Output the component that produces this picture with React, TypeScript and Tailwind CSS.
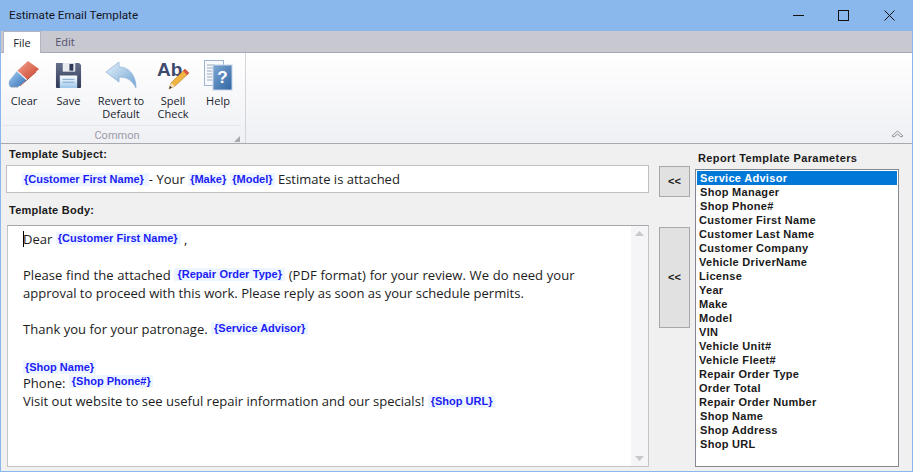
import React from "react";

const bodyFont = "font-['Open_Sans','Noto_Sans',sans-serif]";

function Tag({ children, cls = "px-[3px] align-[2px]" }: { children: React.ReactNode; cls?: string }) {
  return (
    <span className={`inline-block h-[13px] bg-[#edf6ff] font-['Liberation_Sans',sans-serif] text-[11px] leading-[13px] font-bold text-[#1c1cf5] ${cls}`}>
      {children}
    </span>
  );
}

function Eraser() {
  return (
    <svg width="32" height="30" viewBox="0 0 32 30">
      <defs>
        <linearGradient id="er1" x1="0" y1="0" x2="1" y2="1">
          <stop offset="0" stopColor="#f3a18e" />
          <stop offset="1" stopColor="#c9402c" />
        </linearGradient>
        <linearGradient id="er2" x1="0" y1="0" x2="1" y2="1">
          <stop offset="0" stopColor="#a8cdf0" />
          <stop offset="1" stopColor="#2f6fb8" />
        </linearGradient>
      </defs>
      <path d="M20 1 L31 9 L19 20 L9 11 Z" fill="url(#er1)" />
      <path d="M9 11 L19 20 L10 27 L2 27 Q0 24 1 21 Z" fill="url(#er2)" />
      <path d="M9 11 L19 20" stroke="#e8eef5" strokeWidth="1.2" />
      <path d="M12 26 L28 12" stroke="#a33525" strokeWidth="1" opacity="0.7" />
      <path d="M3 27 L10 27" stroke="#8a9bb0" strokeWidth="1" />
    </svg>
  );
}

function Floppy() {
  return (
    <svg width="27" height="27" viewBox="0 0 28 28">
      <defs>
        <linearGradient id="fl1" x1="0" y1="0" x2="0" y2="1">
          <stop offset="0" stopColor="#66708c" />
          <stop offset="1" stopColor="#2f3a58" />
        </linearGradient>
        <linearGradient id="fl2" x1="0" y1="0" x2="0" y2="1">
          <stop offset="0" stopColor="#ffffff" />
          <stop offset="1" stopColor="#9cc6ea" />
        </linearGradient>
      </defs>
      <path d="M1 1 H25 L27 3 V26 Q27 27 26 27 H2 Q1 27 1 26 Z" fill="url(#fl1)" />
      <rect x="8" y="1" width="13" height="9" fill="#e8ebf0" />
      <rect x="15" y="2" width="4" height="7" fill="#2f3a58" />
      <rect x="5" y="14" width="18" height="13" fill="url(#fl2)" />
      <path d="M8 18 H20 M8 21 H20" stroke="#7ea6cc" strokeWidth="1" />
    </svg>
  );
}

function BackArrow() {
  return (
    <svg width="32" height="28" viewBox="0 0 32 28">
      <defs>
        <linearGradient id="ba1" x1="0" y1="0" x2="1" y2="1">
          <stop offset="0" stopColor="#e6f2fb" />
          <stop offset="1" stopColor="#6fa3d2" />
        </linearGradient>
      </defs>
      <path
        d="M1 11 L14 1 L14 6 C23 6 31 13 31 27 C27 19 22 16 14 16 L14 21 Z"
        fill="url(#ba1)"
        stroke="#8fb4d6"
        strokeWidth="0.8"
      />
    </svg>
  );
}

function SpellCheck() {
  return (
    <svg width="33" height="32" viewBox="0 0 33 32">
      <text x="0" y="17" fontFamily="Liberation Sans, sans-serif" fontWeight="700" fontSize="19" fill="#3d4a6e">
        Ab
      </text>
      <path d="M12 30 L14 24 L28 10 L32 14 L18 27 Z" fill="#f2b440" stroke="#a9782a" strokeWidth="0.6" />
      <path d="M26 12 L30 16 L32 14 L28 10 Z" fill="#d9564a" />
      <path d="M12 30 L14 24 L18 27 Z" fill="#f5dfb8" />
      <path d="M12 30 L13 27 L15 28.5 Z" fill="#333" />
    </svg>
  );
}

function HelpIcon() {
  return (
    <svg width="29" height="31" viewBox="0 0 29 31">
      <rect x="0.5" y="0.5" width="19" height="25" fill="#f7f9fc" stroke="#9fb4cf" />
      <path d="M3 5 H11 M3 8 H10 M3 11 H8 M3 14 H8 M3 17 H8 M3 20 H8" stroke="#9aa8bb" strokeWidth="1" />
      <defs>
        <linearGradient id="he1" x1="0" y1="0" x2="1" y2="1">
          <stop offset="0" stopColor="#7fa7d4" />
          <stop offset="1" stopColor="#2f66a3" />
        </linearGradient>
      </defs>
      <rect x="9" y="5" width="19" height="25" fill="url(#he1)" stroke="#c5d4e6" />
      <text x="18.5" y="23" textAnchor="middle" fontFamily="Liberation Sans, sans-serif" fontWeight="700" fontSize="17" fill="#ffffff">
        ?
      </text>
    </svg>
  );
}

const tools: { w: string; icon: React.ReactNode; label: string[] }[] = [
  { w: "w-[42px]", icon: <Eraser />, label: ["Clear"] },
  { w: "w-[47px]", icon: <Floppy />, label: ["Save"] },
  { w: "w-[58px]", icon: <BackArrow />, label: ["Revert to", "Default"] },
  { w: "w-[46px]", icon: <SpellCheck />, label: ["Spell", "Check"] },
  { w: "w-[44px]", icon: <HelpIcon />, label: ["Help"] },
];

const params = [
  "Service Advisor",
  "Shop Manager",
  "Shop Phone#",
  "Customer First Name",
  "Customer Last Name",
  "Customer Company",
  "Vehicle DriverName",
  "License",
  "Year",
  "Make",
  "Model",
  "VIN",
  "Vehicle Unit#",
  "Vehicle Fleet#",
  "Repair Order Type",
  "Order Total",
  "Repair Order Number",
  "Shop Name",
  "Shop Address",
  "Shop URL",
];

function rowClass(i: number) {
  if (i === 0) return "h-[14px] bg-[#0078d7] pl-[3px] text-white";
  if (i < 3 || i > 16) return "h-[14px] pl-[3px]";
  return "h-[14px] pl-[2px]";
}

export default function App() {
  return (
    <div className={`flex h-[472px] w-[913px] flex-col overflow-hidden border-x border-b border-[#8ab8ed] bg-[#f0f0f0] ${bodyFont}`}>
      <div className="-mx-px flex h-[31px] shrink-0 items-center justify-between bg-[#8ab8ed] pl-[9px]">
        <span className="font-['Roboto',sans-serif] text-[11.7px] text-[#14141e]">Estimate Email Template</span>
        <div className="flex items-center">
          <div className="flex w-[46px] justify-center">
            <svg width="11" height="11" viewBox="0 0 11 11"><path d="M0 5.5 H11" stroke="#111" strokeWidth="1" /></svg>
          </div>
          <div className="flex w-[46px] justify-center pr-px">
            <svg width="11" height="11" viewBox="0 0 11 11"><rect x="0.5" y="0.5" width="10" height="10" fill="none" stroke="#111" /></svg>
          </div>
          <div className="flex w-[46px] justify-center pr-px">
            <svg width="11" height="11" viewBox="0 0 11 11"><path d="M0.5 0.5 L10.5 10.5 M10.5 0.5 L0.5 10.5" stroke="#111" strokeWidth="1" /></svg>
          </div>
        </div>
      </div>

      <div className="flex h-[22px] shrink-0 items-end border-b border-[#a8a8b4] bg-[#c8c8d0] pl-[2px]">
        <div className="-mb-px flex h-[22px] w-[38px] items-center justify-center border-x border-t border-[#b4b4be] bg-white pt-[2px] text-[11px] text-[#20242e]">File</div>
        <div className="flex h-[21px] w-[48px] items-center justify-center pt-[2px] text-[11px] text-[#50506a]">Edit</div>
      </div>

      <div className="flex h-[91px] shrink-0 border-b border-[#a8a8ae] bg-linear-to-b from-white to-[#eff0f4]">
        <div className="flex w-[245px] flex-col border-r border-[#d4d4da] pl-[2px]">
          <div className="flex h-[72px] items-start">
            {tools.map((t) => (
              <div key={t.label[0]} className={`flex ${t.w} flex-col items-center`}>
                <div className="flex h-[40px] items-center pt-[4px]">{t.icon}</div>
                <div className="pt-[1px] text-center text-[11px] leading-[13px] text-[#20242e]">
                  {t.label.map((l) => (
                    <div key={l} className="whitespace-nowrap">{l}</div>
                  ))}
                </div>
              </div>
            ))}
          </div>
          <div className="relative mr-[4px] flex h-[18px] items-center justify-center border-t border-[#e6e6ea] pt-[4px] pr-[10px] font-['Roboto',sans-serif] text-[11px] text-[#9a9aa8]">
            Common
            <svg className="absolute right-[1px] bottom-[1px]" width="6" height="6" viewBox="0 0 6 6"><path d="M6 0 V6 H0 Z" fill="#a8a8b0" /></svg>
          </div>
        </div>
        <div className="relative flex-1">
          <svg className="absolute right-[8px] bottom-[5px]" width="13" height="9" viewBox="0 0 13 9">
            <path d="M1 7 L6.5 2 L12 7 L10 8 L6.5 5 L3 8 Z" fill="#f2f2f4" stroke="#8e8e96" strokeWidth="1" />
          </svg>
        </div>
      </div>

      <div className="flex min-h-0 flex-1">
        <div className="flex w-[648px] shrink-0 flex-col pb-[4px] pl-[5px]">
          <div className="h-[21px] pt-[4px] font-['Liberation_Sans',sans-serif] text-[11px] leading-[13px] font-bold tracking-[0.25px] text-[#1a1a1a]">
            <span className="pl-[3px]">Template Subject:</span>
          </div>
          <div className="flex h-[28px] items-center border border-[#c0c0c0] bg-white pt-[2px] pl-[15px] text-[13px] whitespace-pre text-[#222]">
            <Tag cls="pr-[5px] pl-[2px] -translate-y-px">{"{Customer First Name}"}</Tag>
            {"- Your "}
            <Tag cls="pr-[1px] pl-[2px] -translate-y-px">{"{Make}"}</Tag>
            <span className="w-[3px]" />
            <Tag cls="pr-[2px] pl-[2px] -translate-y-px">{"{Model}"}</Tag>
            {" Estimate is attached"}
          </div>
          <div className="h-[32px] pt-[11px] font-['Liberation_Sans',sans-serif] text-[11px] leading-[13px] font-bold tracking-[0.25px] text-[#1a1a1a]">
            <span className="pl-[3px]">Template Body:</span>
          </div>
          <div className="ml-px flex min-h-0 flex-1 border border-[#c4c4c4] border-t-[#a8a8a8] bg-white">
            <div className="relative flex-1 pt-[4px] pl-[15px] text-[13.05px] whitespace-pre text-[#1c1c1c]">
              <div className="absolute top-[5px] left-[15px] h-[16px] w-px bg-black" />
              <div className="h-[18px] leading-[18px]">Dear <Tag cls="pr-[3px] pl-[2px] align-[2px]">{"{Customer First Name}"}</Tag> ,</div>
              <div className="h-[18px]" />
              <div className="h-[18px] leading-[18px] [word-spacing:0.4px]">Please find the attached <Tag>{"{Repair Order Type}"}</Tag> (PDF format) for your review. We do need your</div>
              <div className="h-[18px] leading-[18px]">approval to proceed with this work. Please reply as soon as your schedule permits.</div>
              <div className="h-[18px]" />
              <div className="h-[18px] leading-[18px]">Thank you for your patronage. <Tag>{"{Service Advisor}"}</Tag></div>
              <div className="h-[23px]" />
              <div className="h-[13px] leading-[15px]"><Tag cls="px-[2px] align-[2px]">{"{Shop Name}"}</Tag></div>
              <div className="h-[18px] leading-[18px]">Phone: <Tag cls="pr-[2px] pl-[3px] align-[3px]">{"{Shop Phone#}"}</Tag></div>
              <div className="h-[19px] leading-[19px]">Visit out website to see useful repair information and our specials! <Tag cls="px-[3px] align-[1px]">{"{Shop URL}"}</Tag></div>
            </div>
            <div className="flex w-[17px] shrink-0 flex-col items-center justify-between bg-[#f5f5f7] py-[5px]">
              <svg width="9" height="5" viewBox="0 0 9 5"><path d="M4.5 0 L9 5 H0 Z" fill="#c8c8c8" /></svg>
              <svg width="9" height="5" viewBox="0 0 9 5"><path d="M0 0 H9 L4.5 5 Z" fill="#c8c8c8" /></svg>
            </div>
          </div>
        </div>

        <div className="flex w-[46px] shrink-0 flex-col pt-[22px] pl-[10px]">
          <div className="flex h-[31px] w-[31px] items-center justify-center border border-[#a8a8a8] bg-[#e1e1e1] font-['Liberation_Sans',sans-serif] text-[11px] font-bold text-[#1a1a1a]">&lt;&lt;</div>
          <div className="mt-[30px] flex h-[101px] w-[31px] items-center justify-center border border-[#a8a8a8] bg-[#e1e1e1] font-['Liberation_Sans',sans-serif] text-[11px] font-bold text-[#1a1a1a]">&lt;&lt;</div>
        </div>

        <div className="flex flex-1 flex-col pb-[4px]">
          <div className="h-[25px] pt-[8px] pl-[3px] font-['Liberation_Sans',sans-serif] text-[11px] leading-[13px] font-bold tracking-[0.4px] text-[#1a1a1a]">Report Template Parameters</div>
          <div className="mr-[13px] flex-1 border border-[#828790] bg-white p-px font-['Liberation_Sans',sans-serif] text-[11px] leading-[14px] font-bold tracking-[0.3px] text-[#1a1a1a]">
            {params.map((p, i) => (
              <div key={p} className={rowClass(i)}>{p}</div>
            ))}
          </div>
        </div>
      </div>
    </div>
  );
}
